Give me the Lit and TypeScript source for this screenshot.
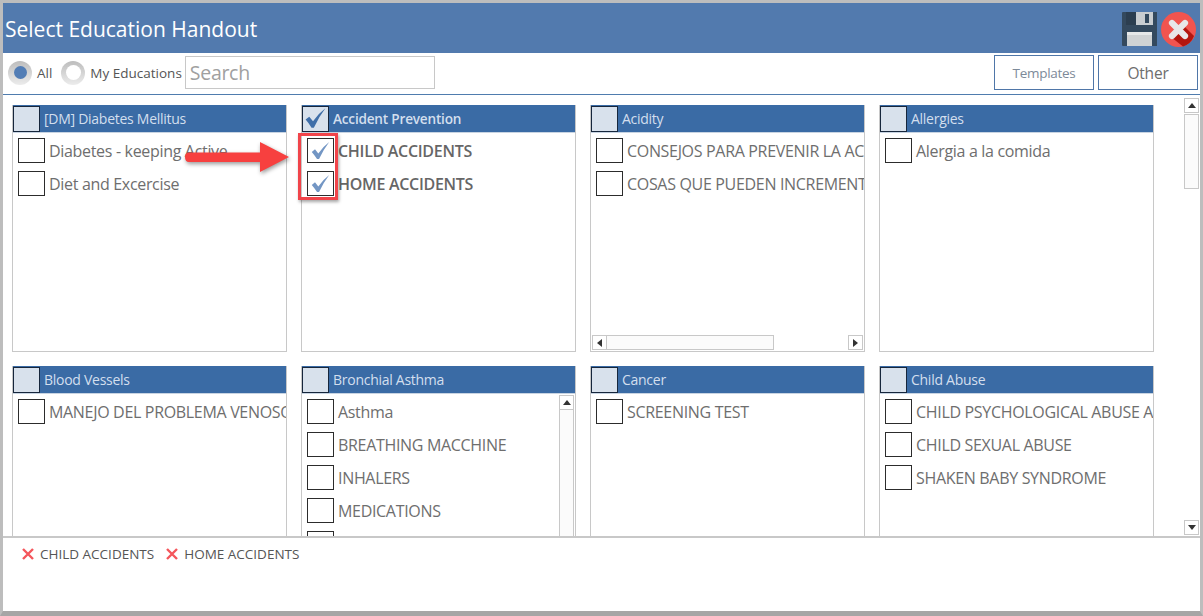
import { LitElement, html, css, svg } from "lit";
import { customElement } from "lit/decorators.js";

type Item = { t: string; on?: boolean };
type Card = { title: string; on?: boolean; items: Item[]; hbar?: boolean; vbar?: boolean };

const cards: Card[] = [
  { title: "[DM] Diabetes Mellitus", items: [{ t: "Diabetes - keeping Active" }, { t: "Diet and Excercise" }] },
  { title: "Accident Prevention", on: true, items: [{ t: "CHILD ACCIDENTS", on: true }, { t: "HOME ACCIDENTS", on: true }] },
  { title: "Acidity", hbar: true, items: [{ t: "CONSEJOS PARA PREVENIR LA ACIDEZ" }, { t: "COSAS QUE PUEDEN INCREMENTAR" }] },
  { title: "Allergies", items: [{ t: "Alergia a la comida" }] },
  { title: "Blood Vessels", items: [{ t: "MANEJO DEL PROBLEMA VENOSO" }] },
  { title: "Bronchial Asthma", vbar: true, items: [{ t: "Asthma" }, { t: "BREATHING MACCHINE" }, { t: "INHALERS" }, { t: "MEDICATIONS" }, { t: "OTHER" }] },
  { title: "Cancer", items: [{ t: "SCREENING TEST" }] },
  { title: "Child Abuse", items: [{ t: "CHILD PSYCHOLOGICAL ABUSE AND NEGLECT" }, { t: "CHILD SEXUAL ABUSE" }, { t: "SHAKEN BABY SYNDROME" }] },
];

const tickPath = "M2.5 13 L6 10.2 L9.6 14.6 Q14.5 7.5 21.5 2.2 Q15.5 10 10.4 20.8 L8.2 20.8 Q5.6 16.5 2.5 13Z";
const check = svg`<svg class="tick" viewBox="0 0 24 24"><path d=${tickPath} fill="#7396c4"/></svg>`;
const checkDark = svg`<svg class="tick big" viewBox="0 0 24 24"><path d=${tickPath} fill="#3f6ea8"/></svg>`;
const up = html`<svg class="arr" viewBox="0 0 8 5"><path d="M0 5 L4 0 L8 5Z" fill="#333"/></svg>`;
const down = html`<svg class="arr" viewBox="0 0 8 5"><path d="M0 0 L8 0 L4 5Z" fill="#333"/></svg>`;
const left = html`<svg class="arrh" viewBox="0 0 5 8"><path d="M5 0 L0 4 L5 8Z" fill="#333"/></svg>`;
const right = html`<svg class="arrh" viewBox="0 0 5 8"><path d="M0 0 L5 4 L0 8Z" fill="#333"/></svg>`;
const redX = html`<svg class="x" viewBox="0 0 12 12"><path d="M1 1 L11 11 M11 1 L1 11" stroke="#f4565c" stroke-width="2.4"/></svg>`;

@customElement("app-root")
export class AppRoot extends LitElement {
  static styles = css`
    :host { display: block; width: 1203px; height: 616px; font-family: "Open Sans", "Liberation Sans", sans-serif; }
    * { box-sizing: border-box; }
    .win { position: relative; width: 1203px; height: 616px; display: flex; flex-direction: column; background: #fff;
      border: solid #bdbdbd; border-width: 3px 3px 5px 3px; border-bottom-color: #a6a6a6; overflow: hidden; }
    .title { flex: none; height: 50px; background: #527aae; display: flex; align-items: center; padding: 3px 4px 0 2px; gap: 4px; }
    .title h1 { margin: 0 0 2px; flex: 1; font-size: 21px; font-weight: 400; color: #fff; letter-spacing: 0; }
    .tb-icon { width: 35px; height: 35px; display: block; }
    .tools { flex: none; height: 42px; border-bottom: 1px solid #4f7cae; display: flex; align-items: center; padding: 0 2px 2px 5px; }
    .radio { width: 24px; height: 24px; border-radius: 50%; background: linear-gradient(#bdbdbd, #ececec); display: flex; align-items: center; justify-content: center; flex: none; }
    .radio i { width: 15px; height: 15px; border-radius: 50%; background: #fff; display: flex; align-items: center; justify-content: center; }
    .radio.on i { background: #527db5; width: 13px; height: 13px; }
    .lbl { font-size: 13.5px; color: #555; margin: 0 9px 0 5px; white-space: nowrap; }
    .lbl.my { margin-right: 3px; }
    .search { width: 250px; height: 33px; border: 1px solid #c8c8c8; font-size: 19.5px; color: #a0a0a0; padding: 3px 4px; line-height: 26px; letter-spacing: -0.3px; }
    .spacer { flex: 1; }
    .btn { height: 35px; width: 100px; border: 1px solid #4f76a8; display: flex; align-items: center; justify-content: center; color: #7d8a99; font-size: 13.5px; letter-spacing: -0.3px; }
    .btn.other { font-size: 15.5px; color: #6d6d6d; margin-left: 4px; letter-spacing: -0.2px; }
    .main { flex: 1; min-height: 0; display: flex; overflow: hidden; }
    .grid { flex: none; width: 1181px; display: grid; grid-template-columns: repeat(4, 275px); grid-auto-rows: 247px; gap: 14px; padding: 10px 0 0 9px; }
    .card { border: 1px solid #c8c8c8; border-top: 0; display: flex; flex-direction: column; min-width: 0; min-height: 0; position: relative; overflow: hidden; }
    .head { flex: none; height: 28px; margin: 0 -1px; background: #3a6ba5; border-bottom: 1px solid #c8d4e2; display: flex; align-items: center; padding-left: 1px; color: #d3dfee; font-size: 14px; letter-spacing: -0.27px; }
    .head.on { font-size: 13.6px; font-weight: 600; letter-spacing: -0.2px; }
    .hbox { width: 27px; height: 26px; background: #d8e1ec; border: 1.5px solid #16263c; margin-right: 4px; flex: none; display: flex; align-items: center; justify-content: center; }
    .list { flex: 1; min-height: 0; display: flex; flex-direction: column; gap: 8px; padding: 5px 0 0 5px; overflow: hidden; }
    .row { flex: none; height: 25px; display: flex; align-items: center; gap: 4px; font-size: 16px; color: #6e6e6e; white-space: nowrap; letter-spacing: -0.32px; }
    .row.on { font-weight: 600; color: #666; letter-spacing: -0.3px; }
    .box { flex: none; width: 27px; height: 25px; border: 1px solid #2c2c2c; background: #fff; display: flex; align-items: center; justify-content: center; }
    .tick { width: 23px; height: 22px; display: block; }
    .tick.big { width: 27px; height: 25px; }
    .hbar { position: absolute; left: 1px; right: 1px; bottom: 1px; height: 15px; display: flex; justify-content: space-between; background: #fff; }
    .vbar { position: absolute; top: 29px; right: 1px; bottom: 0; width: 15px; display: flex; flex-direction: column; background: #fbfbfb; border-left: 1px solid #c8c8c8; border-right: 1px solid #c8c8c8; }
    .sb { flex: none; width: 15px; height: 15px; border: 1px solid #c8c8c8; background: #fff; display: flex; align-items: center; justify-content: center; }
    .vbar .sb { margin-left: -1px; }
    .hthumb { position: absolute; left: 0; width: 182px; top: 0; bottom: 0; border: 1px solid #c8c8c8; background: #fbfbfb; }
    .hbar .sb { position: relative; }
    .arr { width: 8px; height: 5px; display: block; }
    .arrh { width: 5px; height: 8px; display: block; }
    .page-sb { flex: none; width: 15px; margin: 3px 0 1px 0; display: flex; flex-direction: column; justify-content: space-between; }
    .page-sb .top { display: flex; flex-direction: column; gap: 1px; }
    .thumb { height: 75px; border: 1px solid #c8c8c8; background: #fbfbfb; }
    .bottom { flex: none; height: 75px; border-top: 2px solid #c8c8c8; display: flex; align-items: flex-start; padding: 7px 0 0 19px; gap: 12px; font-size: 13.5px; color: #555; }
    .chip { display: flex; align-items: center; gap: 6px; height: 18px; white-space: nowrap; }
    .x { width: 12px; height: 12px; display: block; flex: none; }
    .mark { position: absolute; left: 295px; top: 130px; width: 40px; height: 67px; border: 3px solid #f1444a; box-shadow: 1px 2px 3px rgba(0,0,0,.35); }
    .arrow { position: absolute; left: 182px; top: 136px; width: 106px; height: 36px; display: block; filter: drop-shadow(1px 2px 2px rgba(0,0,0,.4)); }
  `;

  private card(c: Card) {
    return html`<section class="card">
      <div class="head ${c.on ? "on" : ""}"><span class="hbox">${c.on ? checkDark : ""}</span>${c.title}</div>
      <div class="list">
        ${c.items.map((i) => html`<div class="row ${i.on ? "on" : ""}"><span class="box">${i.on ? check : ""}</span><span>${i.t}</span></div>`)}
      </div>
      ${c.hbar ? html`<div class="hbar"><span class="hthumb"></span><span class="sb">${left}</span><span class="sb">${right}</span></div>` : ""}
      ${c.vbar ? html`<div class="vbar"><span class="sb">${up}</span></div>` : ""}
    </section>`;
  }

  render() {
    return html`<div class="win">
      <header class="title">
        <h1>Select Education Handout</h1>
        <svg class="tb-icon" viewBox="0 0 35 35">
          <path d="M1 0 H35 V34 H1 Q0 34 0 33 V1 Q0 0 1 0Z" fill="#34495e"/>
          <rect x="4" y="0" width="27" height="13" fill="#2c3e50"/>
          <rect x="14" y="0" width="17" height="13" fill="#c9cdd1"/>
          <rect x="23" y="2" width="4" height="9" fill="#34495e"/>
          <path d="M5 21 Q5 20 6 20 H29 Q30 20 30 21 V34 H5Z" fill="#cfd2d4"/>
          <rect x="5" y="20" width="25" height="3" fill="#e6e8e9"/>
        </svg>
        <svg class="tb-icon" viewBox="0 0 35 35">
          <circle cx="17.5" cy="17.5" r="17.5" fill="#f1544f"/>
          <path d="M10 25 L21 12 L33 24 A17.5 17.5 0 0 1 22 34.5Z" fill="#b3160f"/>
          <path d="M11 11 L24 24 M24 11 L11 24" stroke="#e8e8ea" stroke-width="6.2" stroke-linecap="round"/>
        </svg>
      </header>
      <div class="tools">
        <span class="radio on"><i></i></span><span class="lbl">All</span>
        <span class="radio"><i></i></span><span class="lbl my">My Educations</span>
        <div class="search">Search</div>
        <span class="spacer"></span>
        <div class="btn">Templates</div>
        <div class="btn other">Other</div>
      </div>
      <div class="main">
        <div class="grid">${cards.map((c) => this.card(c))}</div>
        <div class="page-sb">
          <div class="top"><span class="sb">${up}</span><span class="thumb"></span></div>
          <span class="sb">${down}</span>
        </div>
      </div>
      <footer class="bottom">
        <span class="chip">${redX}CHILD ACCIDENTS</span>
        <span class="chip">${redX}HOME ACCIDENTS</span>
      </footer>
      <svg class="arrow" viewBox="0 0 106 36"><path d="M4 13.5 H75 V3 L104 18 L75 33 V23 H4 Q0 23 0 18 Q0 13.5 4 13.5Z" fill="#f7403f"/></svg>
      <div class="mark"></div>
    </div>`;
  }
}
